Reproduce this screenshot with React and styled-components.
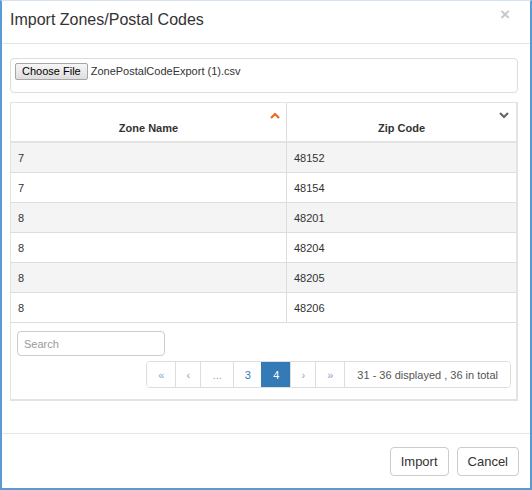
import React from "react";
import styled, { createGlobalStyle } from "styled-components";

const Global = createGlobalStyle`
  html, body { margin: 0; padding: 0; background: #fff; }
  body { font-family: "Liberation Sans", Arial, sans-serif; color: #333; }
  * { box-sizing: border-box; }
`;

const Frame = styled.div`
  width: 532px;
  height: 490px;
  border: 2px solid #5b9bd5;
  border-top: 1px solid #d6e4f2;
  display: flex;
  flex-direction: column;
  background: #fff;
`;

const Header = styled.div`
  height: 43px;
  border-bottom: 1px solid #e5e5e5;
  display: flex;
  align-items: flex-start;
  justify-content: space-between;
  padding: 7px 12px 0 8px;
`;

const Title = styled.h4`
  margin: 0;
  font-size: 16px;
  font-weight: 400;
  line-height: 24px;
  color: #333;
`;

const Close = styled.span`
  font-size: 17px;
  font-weight: 700;
  line-height: 14px;
  color: #c8c8c8;
  margin-right: 8px;
`;

const Body = styled.div`
  flex: 1;
  padding: 14px 12px 0 8px;
  display: flex;
  flex-direction: column;
`;

const Well = styled.div`
  height: 35px;
  border: 1px solid #ddd;
  border-radius: 4px;
  padding: 4px;
  display: flex;
  align-items: flex-start;
  gap: 3px;
`;

const FileButton = styled.button`
  height: 17px;
  padding: 0 6px;
  font-family: "Liberation Sans", Arial, sans-serif;
  font-size: 11px;
  line-height: 15px;
  color: #000;
  background: linear-gradient(#f6f6f6, #dedede);
  border: 1px solid #a6a6a6;
  border-radius: 2px;
`;

const FileName = styled.span`
  font-size: 11px;
  line-height: 17px;
  color: #333;
`;

const TablePanel = styled.div`
  margin-top: 9px;
  border: 1px solid #e3e3e3;
  border-right-width: 2px;
  border-bottom-width: 2px;
  display: flex;
  flex-direction: column;
  padding-bottom: 11px;
`;

const Grid = styled.div`
  display: grid;
  grid-template-columns: 275px 1fr;
`;

const HeadCell = styled.div`
  position: relative;
  height: 40px;
  display: flex;
  align-items: center;
  justify-content: center;
  padding-top: 11px;
  font-size: 11px;
  font-weight: 700;
  color: #333;
  border-bottom: 2px solid #e3e3e3;
  border-left: ${(p) => (p.$first ? "none" : "1px solid #ddd")};
`;

const SortIcon = styled.svg`
  position: absolute;
  right: ${(p) => p.$right}px;
  top: 9px;
`;

const Cell = styled.div`
  height: 30px;
  display: flex;
  align-items: center;
  padding-left: 7px;
  font-size: 11px;
  color: #333;
  background: ${(p) => (p.$odd ? "#f4f4f4" : "#fff")};
  border-bottom: 1px solid #ddd;
  border-left: ${(p) => (p.$first ? "none" : "1px solid #ddd")};
`;

const Search = styled.input`
  margin: 8px 0 0 6px;
  width: 148px;
  height: 25px;
  border: 1px solid #ccc;
  border-radius: 4px;
  padding: 0 6px;
  font-family: "Liberation Sans", Arial, sans-serif;
  font-size: 11px;
  color: #555;
  &::placeholder { color: #999; }
`;

const Pager = styled.div`
  align-self: flex-end;
  margin: 5px 5px 0 0;
  display: flex;
  border: 1px solid #ddd;
  border-radius: 4px;
  overflow: hidden;
  height: 27px;
`;

const PageItem = styled.span`
  display: flex;
  align-items: center;
  justify-content: center;
  width: ${(p) => (p.$w ? `${p.$w}px` : "auto")};
  padding: 0 ${(p) => (p.$info ? 12 : 0)}px;
  font-size: 11px;
  color: ${(p) =>
    p.$active ? "#fff" : p.$info ? "#555" : p.$muted ? "#8aa4c0" : "#337ab7"};
  background: ${(p) => (p.$active ? "#337ab7" : "#fff")};
  border-left: ${(p) => (p.$first ? "none" : "1px solid #ddd")};
  ${(p) => (p.$active ? "border-left-color: #337ab7;" : "")}
`;

const Footer = styled.div`
  height: 55px;
  border-top: 1px solid #e5e5e5;
  display: flex;
  justify-content: flex-end;
  align-items: flex-start;
  gap: 8px;
  padding: 13px 11px 0 0;
`;

const Button = styled.button`
  height: 29px;
  padding: 0 10px;
  background: #fff;
  border: 1px solid #ccc;
  border-radius: 4px;
  font-family: "Liberation Sans", Arial, sans-serif;
  font-size: 13px;
  color: #333;
`;

const rows = [
  ["7", "48152"],
  ["7", "48154"],
  ["8", "48201"],
  ["8", "48204"],
  ["8", "48205"],
  ["8", "48206"],
];

export default function App() {
  return (
    <>
      <Global />
      <Frame>
        <Header>
          <Title>Import Zones/Postal Codes</Title>
          <Close>×</Close>
        </Header>
        <Body>
          <Well>
            <FileButton>Choose File</FileButton>
            <FileName>ZonePostalCodeExport (1).csv</FileName>
          </Well>
          <TablePanel>
            <Grid>
              <HeadCell $first>
                Zone Name
                <SortIcon $right={6} width="10" height="7" viewBox="0 0 10 7">
                  <path d="M1 6 L5 2 L9 6" fill="none" stroke="#f26522" strokeWidth="2.2" />
                </SortIcon>
              </HeadCell>
              <HeadCell>
                Zip Code
                <SortIcon $right={7} width="10" height="7" viewBox="0 0 10 7">
                  <path d="M1 1 L5 5 L9 1" fill="none" stroke="#666" strokeWidth="2.2" />
                </SortIcon>
              </HeadCell>
              {rows.map(([z, c], i) => (
                <React.Fragment key={i}>
                  <Cell $first $odd={i % 2 === 0}>{z}</Cell>
                  <Cell $odd={i % 2 === 0}>{c}</Cell>
                </React.Fragment>
              ))}
            </Grid>
            <Search placeholder="Search" />
            <Pager>
              <PageItem $first $muted $w={28}>«</PageItem>
              <PageItem $muted $w={25}>‹</PageItem>
              <PageItem $muted $w={33}>...</PageItem>
              <PageItem $w={28}>3</PageItem>
              <PageItem $active $w={29}>4</PageItem>
              <PageItem $muted $w={25}>›</PageItem>
              <PageItem $muted $w={29}>»</PageItem>
              <PageItem $info>31 - 36 displayed , 36 in total</PageItem>
            </Pager>
          </TablePanel>
        </Body>
        <Footer>
          <Button>Import</Button>
          <Button>Cancel</Button>
        </Footer>
      </Frame>
    </>
  );
}
